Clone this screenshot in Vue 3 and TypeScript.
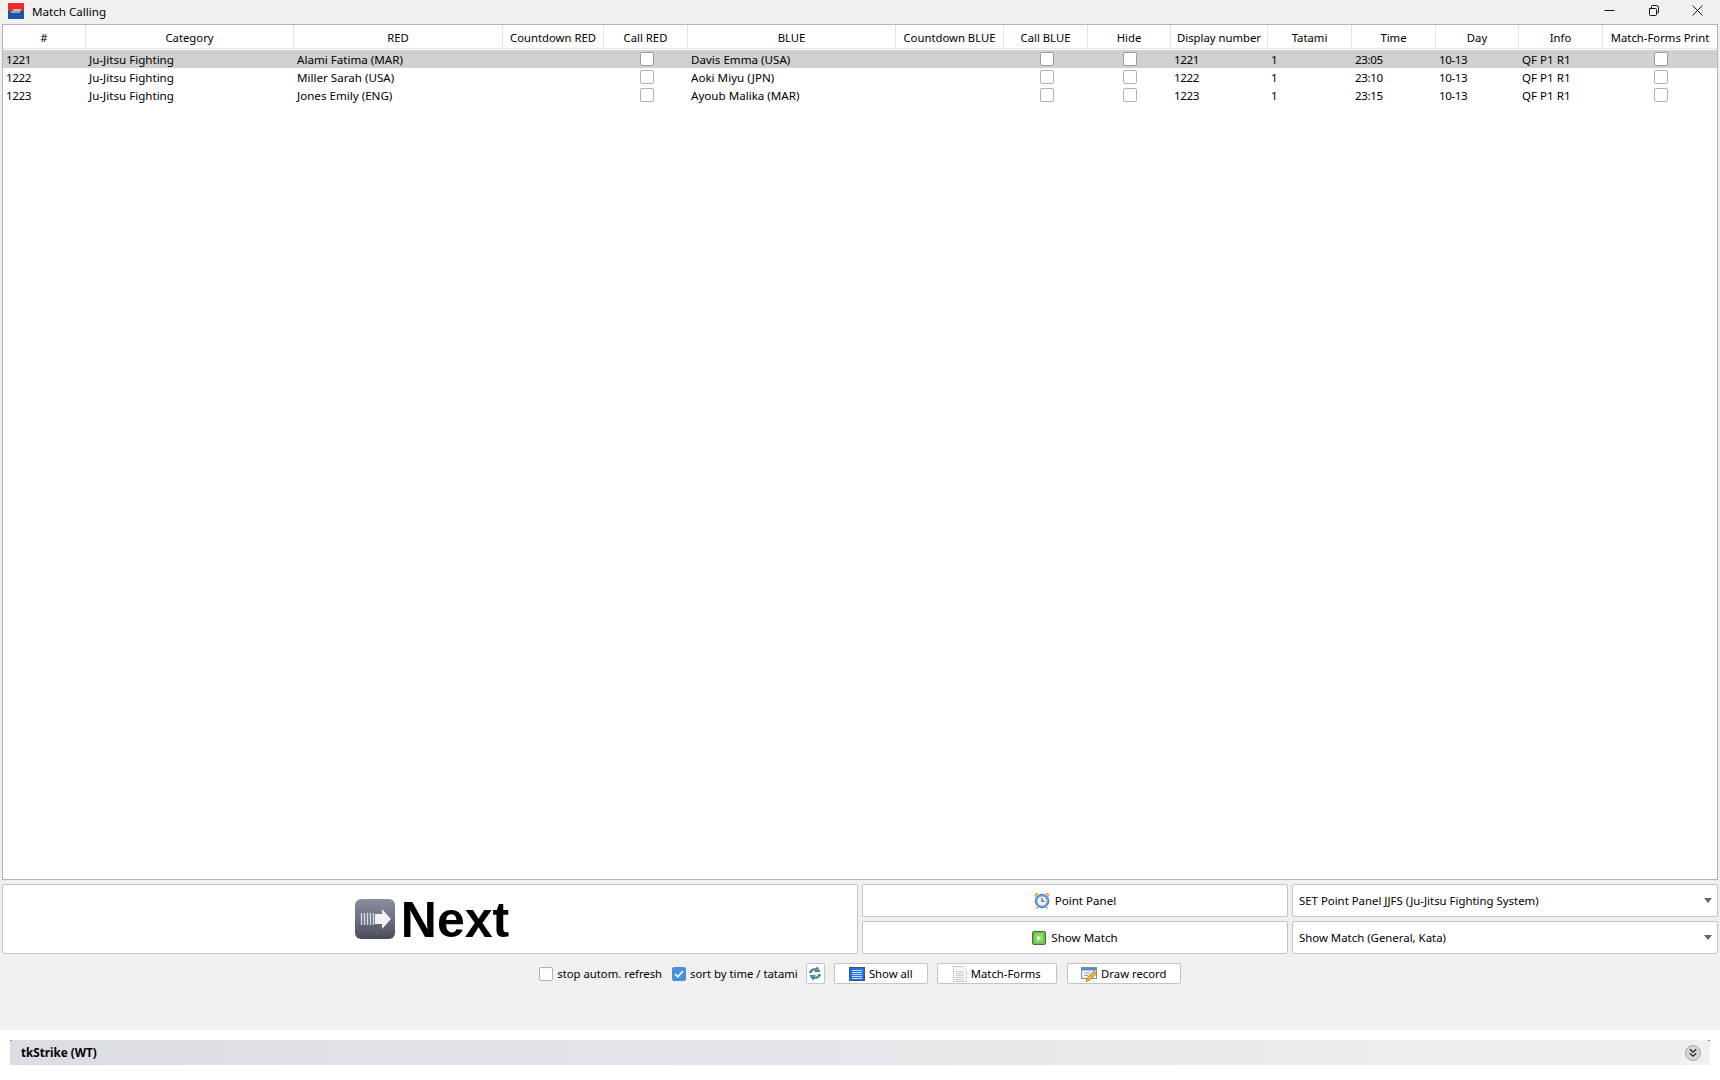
<script setup lang="ts">
interface Match {
  id: string
  category: string
  red: string
  blue: string
  info: string
  time: string
  selected: boolean
}

const headers: string[] = [
  '#', 'Category', 'RED', 'Countdown RED', 'Call RED', 'BLUE', 'Countdown BLUE', 'Call BLUE',
  'Hide', 'Display number', 'Tatami', 'Time', 'Day', 'Info', 'Match-Forms Print'
]

const matches: Match[] = [
  { id: '1221', category: 'Ju-Jitsu Fighting', red: 'Alami Fatima (MAR)', blue: 'Davis Emma (USA)', info: 'QF P1 R1', time: '23:05', selected: true },
  { id: '1222', category: 'Ju-Jitsu Fighting', red: 'Miller Sarah (USA)', blue: 'Aoki Miyu (JPN)', info: 'QF P1 R1', time: '23:10', selected: false },
  { id: '1223', category: 'Ju-Jitsu Fighting', red: 'Jones Emily (ENG)', blue: 'Ayoub Malika (MAR)', info: 'QF P1 R1', time: '23:15', selected: false }
]
</script>

<template>
  <div class="window">
    <header class="titlebar">
      <svg class="app-icon" width="16" height="16" viewBox="0 0 16 16">
        <rect width="16" height="8" fill="#ee2a24" />
        <rect y="8" width="16" height="8" fill="#1c55a8" />
        <rect x="5" y="6" width="8" height="2" fill="#b8bcc8" />
        <rect x="3" y="8" width="9" height="2" fill="#9aa4bc" />
      </svg>
      <span class="title">Match Calling</span>
      <div class="controls">
        <svg class="ctl" width="11" height="11" viewBox="0 0 11 11"><path d="M0.5 5.5H10.5" stroke="#111" fill="none" /></svg>
        <svg class="ctl" width="11" height="11" viewBox="0 0 11 11"><path d="M1.5 3.5H7.5a1 1 0 0 1 1 1V9.5a1 1 0 0 1-1 1H2.5a1 1 0 0 1-1-1ZM3.5 3.2V1.5a1 1 0 0 1 1-1H8.5a2 2 0 0 1 2 2V7a1 1 0 0 1-1 1H8.8" stroke="#111" fill="none" /></svg>
        <svg class="ctl" width="11" height="11" viewBox="0 0 11 11"><path d="M0.5 0.5L10.5 10.5M10.5 0.5L0.5 10.5" stroke="#111" fill="none" /></svg>
      </div>
    </header>

    <section class="table">
      <div class="row head">
        <div v-for="h in headers" :key="h" class="th">{{ h }}</div>
      </div>
      <div v-for="m in matches" :key="m.id" class="row body" :class="{ selected: m.selected }">
        <div class="td num">{{ m.id }}</div>
        <div class="td">{{ m.category }}</div>
        <div class="td">{{ m.red }}</div>
        <div class="td"></div>
        <div class="td mid"><span class="cb"></span></div>
        <div class="td">{{ m.blue }}</div>
        <div class="td"></div>
        <div class="td mid"><span class="cb"></span></div>
        <div class="td mid"><span class="cb"></span></div>
        <div class="td num">{{ m.id }}</div>
        <div class="td num">1</div>
        <div class="td num">{{ m.time }}</div>
        <div class="td num">10-13</div>
        <div class="td">{{ m.info }}</div>
        <div class="td mid"><span class="cb"></span></div>
      </div>
    </section>

    <section class="actions">
      <button class="btn next" type="button">
        <svg width="42" height="42" viewBox="0 0 42 42">
          <defs>
            <linearGradient id="nextBg" x1="0" y1="0" x2="0" y2="1">
              <stop offset="0" stop-color="#8c8f9e" />
              <stop offset="0.5" stop-color="#6c6f80" />
              <stop offset="1" stop-color="#4a4c5a" />
            </linearGradient>
          </defs>
          <rect x="1" y="1" width="40" height="40" rx="6" fill="url(#nextBg)" />
          <path d="M7.500 15v12M10.500 15v12M13.500 15v12M16.500 15v12M19.500 15v12" stroke="#d8d9df" stroke-width="1.400" fill="none" />
          <path d="M21 16h7v-5l9 10-9 10v-5H21Z" fill="#f2f2f5" />
        </svg>
        <span class="next-label">Next</span>
      </button>
      <button class="btn wide point" type="button">
        <svg width="16" height="17" viewBox="0 0 16 17">
          <path d="M1 5 4.500 1.500 2.500 .8 .5 2.600ZM15 5 11.500 1.500 13.500 .8 15.500 2.600Z" fill="#eaa81c" />
          <path d="M3.500 15 2.500 16.500M12.500 15 13.500 16.500" stroke="#777" stroke-width="1.200" />
          <circle cx="8" cy="9" r="6.800" fill="#6fa2dc" stroke="#4a78b0" />
          <circle cx="8" cy="9" r="4.600" fill="#eef3fa" />
          <path d="M8 6v3.200h2.400" stroke="#444" stroke-width="1.100" fill="none" />
        </svg>
        <span>Point Panel</span>
      </button>
      <div class="combo"><span>SET Point Panel JJFS (Ju-Jitsu Fighting System)</span><i class="arrow"></i></div>
      <button class="btn wide show" type="button">
        <svg width="14" height="14" viewBox="0 0 14 14">
          <rect x=".5" y=".5" width="13" height="13" rx="1.500" fill="#6cc04a" stroke="#3c7a28" />
          <rect x="3" y="2.500" width="8" height="9" fill="#8ed66c" />
          <path d="M5.500 4.500 9 7 5.500 9.500Z" fill="#fff" />
        </svg>
        <span>Show Match</span>
      </button>
      <div class="combo"><span>Show Match (General, Kata)</span><i class="arrow"></i></div>
    </section>

    <section class="options">
      <label class="check"><span class="cb"></span>stop autom. refresh</label>
      <label class="check second"><span class="cb on">
        <svg width="10" height="8" viewBox="0 0 10 8"><path d="M1 4 3.800 6.800 9 1" stroke="#fff" stroke-width="1.600" fill="none" /></svg>
      </span>sort by time / tatami</label>
      <button class="tool refresh" type="button">
        <svg width="14" height="15" viewBox="0 0 14 15">
          <path d="M1.500 6.500C2 3.500 5 2 8 3l1.200-2 2.600 4.400-5 .2 1-1.700C6 3.300 4 4.300 3.500 6.500Z" fill="#4c9cb0" stroke="#1f5a70" stroke-width=".7" />
          <path d="M12.500 8.500C12 11.500 9 13 6 12l-1.200 2-2.600-4.400 5-.2-1 1.700C8 11.700 10 10.700 10.500 8.500Z" fill="#4c9cb0" stroke="#1f5a70" stroke-width=".7" />
        </svg>
      </button>
      <button class="tool all" type="button">
        <svg width="16" height="14" viewBox="0 0 16 14">
          <rect x=".5" y=".5" width="15" height="13" fill="#1e6fe8" stroke="#44546a" />
          <path d="M3 3.500H13M3 5.500H13M3 7.500H13M3 9.500H13M3 11.500H13" stroke="#c8defa" />
        </svg>
        Show all
      </button>
      <button class="tool forms" type="button">
        <svg width="14" height="16" viewBox="0 0 14 16">
          <path d="M.5.5H9.500L13.500 4.500V15.500H.5Z" fill="#f8f8f8" stroke="#c8c8c8" />
          <path d="M2.500 5.500H11M2.500 7.500H11M2.500 9.500H11M2.500 11.500H11M2.500 13.500H11" stroke="#cfcfcf" />
        </svg>
        Match-Forms
      </button>
      <button class="tool draw" type="button">
        <svg width="16" height="16" viewBox="0 0 16 16">
          <rect x=".5" y="1.500" width="15" height="11" fill="#f4f6fa" stroke="#7a8ca8" />
          <rect x="1" y="2" width="14" height="2.500" fill="#5f8ac4" />
          <path d="M3 7H9M3 9.500H7" stroke="#9aa4b4" />
          <path d="M5 15.500 6 12 13 5 15.500 7.500 8.500 14.500Z" fill="#f0b030" stroke="#a8701a" stroke-width=".7" />
        </svg>
        Draw record
      </button>
    </section>

    <div class="spacer"></div>

    <footer class="dock">
      <div class="panel">
        <strong>tkStrike (WT)</strong>
        <svg width="16" height="16" viewBox="0 0 16 16">
          <circle cx="8" cy="8" r="7.500" fill="#d4d5da" stroke="#a8a8b0" />
          <path d="M4.800 4.200 8 7.200 11.200 4.200M4.800 8.200 8 11.200 11.200 8.200" stroke="#222" stroke-width="1.300" fill="none" />
        </svg>
      </div>
    </footer>
  </div>
</template>

<style>
html, body { margin: 0; background: #f0f0f0; }
</style>

<style scoped>
.window {
  width: 1720px;
  height: 1080px;
  display: flex;
  flex-direction: column;
  background: #f0f0f0;
  color: #000;
  font-family: "Noto Sans", "Open Sans", sans-serif;
  font-size: 11.6px;
  overflow: hidden;
}
.titlebar {
  height: 24px;
  flex: none;
  display: flex;
  align-items: center;
  padding-left: 8px;
}
.title { margin-left: 8px; margin-top: -2px; }
.app-icon { margin-top: -2px; }
.controls {
  margin-left: auto;
  display: flex;
  gap: 33px;
  padding-right: 17px;
  margin-top: -4px;
}
.table {
  flex: none;
  height: 856px;
  box-sizing: border-box;
  margin: 0 2px;
  border: 1px solid #b4b4b4;
  background: #fff;
}
.row {
  display: grid;
  grid-template-columns: 83px 208px 209px 101px 84px 208px 108px 84px 83px 97px 84px 84px 83px 84px 114px;
}
.head { height: 25px; }
.th {
  display: flex;
  align-items: center;
  justify-content: center;
  height: 24px;
  padding-top: 2px;
  box-sizing: border-box;
  border-right: 1px solid #e5e5e5;
  border-bottom: 1px solid #e5e5e5;
  white-space: nowrap;
  font-size: 11.3px;
}
.th:last-child { border-right: 0; }
.body { height: 18px; }
.body.selected { background: #d0d0d0; }
.td {
  padding: 1px 0 0 3px;
  box-sizing: border-box;
  height: 18px;
  line-height: 17px;
  white-space: nowrap;
  overflow: hidden;
}
.td.num { letter-spacing: -0.4px; }
.td.mid {
  padding: 0 0 0 1px;
  display: flex;
  align-items: center;
  justify-content: center;
}
.cb {
  display: inline-flex;
  align-items: center;
  justify-content: center;
  width: 14px;
  height: 14px;
  box-sizing: border-box;
  border: 1px solid #b0b0b0;
  border-radius: 2px;
  background: #fff;
  flex: none;
}
.selected .cb { border-color: #9c9c9c; }
.cb.on { background: #4a90d9; border-color: #4a90d9; }
.actions {
  flex: none;
  margin: 4px 2px 0;
  display: grid;
  grid-template-columns: 856px 426px 426px;
  grid-template-rows: 33px 33px;
  gap: 4px;
}
.btn, .combo, .tool {
  box-sizing: border-box;
  border: 1px solid #c4c4c4;
  border-radius: 2px;
  background: #fff;
  font: inherit;
  color: inherit;
  padding: 0;
  display: flex;
  align-items: center;
}
.btn { justify-content: center; gap: 5px; }
.next {
  grid-row: 1 / 3;
  font-family: "Liberation Sans", Arial, sans-serif;
  font-weight: 700;
  font-size: 50px;
  gap: 5px;
  padding-left: 3px;
}
.next-label { margin-top: 2px; }
.show { grid-column: 2; grid-row: 2; }
.combo {
  padding: 0 5px 0 6px;
  justify-content: space-between;
  font-size: 11.4px;
}
.arrow {
  width: 0;
  height: 0;
  border-left: 4.500px solid transparent;
  border-right: 4.500px solid transparent;
  border-top: 5px solid #666;
}
.options {
  flex: none;
  margin-top: 9px;
  height: 21px;
  display: flex;
  align-items: center;
  justify-content: center;
  font-size: 11.3px;
}
.check { display: flex; align-items: center; gap: 4px; line-height: 23px; }
.second { margin-left: 10px; }
.tool {
  height: 21px;
  justify-content: center;
  gap: 4px;
}
.refresh { width: 19px; margin-left: 8px; }
.all { width: 94px; margin-left: 9px; }
.forms { width: 120px; margin-left: 9px; }
.draw { width: 114px; margin-left: 10px; }
.spacer { flex: 1; }
.dock {
  flex: none;
  height: 50px;
  background: #fff;
  padding: 10px 10px 0;
  box-sizing: border-box;
}
.panel {
  position: relative;
  height: 25px;
  display: flex;
  align-items: center;
  justify-content: space-between;
  padding: 0 9px 0 11px;
  background: linear-gradient(90deg, #dcdde2 0%, #e6e6ea 50%, #f0f0f0 100%);
}
.panel::before, .panel::after {
  content: "";
  position: absolute;
  top: 0;
  height: 1px;
  width: 2px;
  background: #6e8fe0;
}
.panel::before { left: 0; }
.panel::after { right: 0; }
.panel strong { font-size: 11.700px; margin-top: -1px; }
</style>
